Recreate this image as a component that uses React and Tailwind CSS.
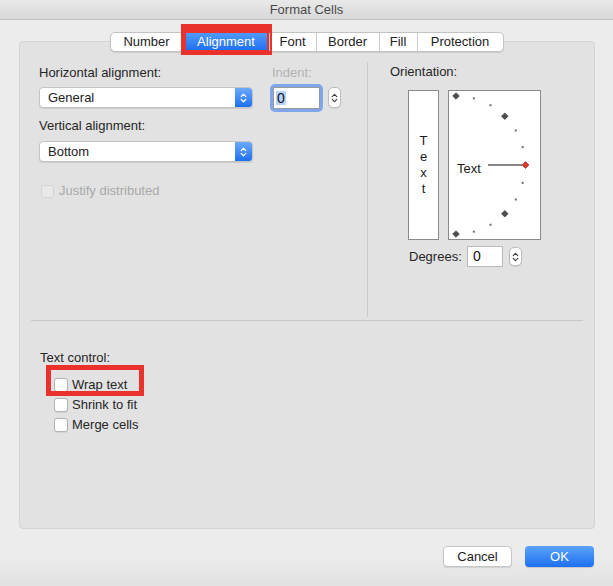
import React from "react";

function Chevrons({ color = "#fff", sw = 1.3 }) {
  return (
    <svg width="7" height="12" viewBox="0 0 7 12" fill="none" stroke={color} strokeWidth={sw} strokeLinecap="round" strokeLinejoin="round">
      <path d="M1.2 4.6 L3.5 2.3 L5.8 4.6" />
      <path d="M1.2 7.4 L3.5 9.7 L5.8 7.4" />
    </svg>
  );
}

function Select({ label }) {
  return (
    <div className="flex h-[21px] w-[214px] overflow-hidden rounded-[4px] border border-[#c4c4c4] bg-white shadow-[0_1px_1px_rgba(0,0,0,0.10)]">
      <div className="flex-1 pl-[8px] text-[13px] leading-[19px] text-[#222]">{label}</div>
      <div className="flex w-[17px] items-center justify-center bg-gradient-to-b from-[#6aa9fa] to-[#1c6ef0]">
        <Chevrons />
      </div>
    </div>
  );
}

function Stepper({ h = "h-[21px]" }) {
  return (
    <div className={`flex w-[13px] ${h} items-center justify-center rounded-[5px] border border-[#bdbdbd] bg-white shadow-[0_1px_1px_rgba(0,0,0,0.08)]`}>
      <Chevrons color="#3a3a3a" sw={1.1} />
    </div>
  );
}

function Checkbox({ disabled }) {
  return (
    <div
      className={
        disabled
          ? "h-[13px] w-[13px] rounded-[3px] border border-[#d3d3d3] bg-[#e9e9e9]"
          : "h-[14px] w-[14px] rounded-[3px] border border-[#b3b3b3] bg-white shadow-[0_1px_1px_rgba(0,0,0,0.08)]"
      }
    />
  );
}

function Dial() {
  const cx = 7;
  const cy = 74;
  const r = 69;
  const dots = [75, 60, 30, 15, -15, -30, -60, -75];
  const diamonds = [90, 45, -45, -90];
  const pt = (a) => [cx + r * Math.cos((a * Math.PI) / 180), cy - r * Math.sin((a * Math.PI) / 180)];
  const diamond = (x, y, s) => `M${x} ${y - s} L${x + s} ${y} L${x} ${y + s} L${x - s} ${y} Z`;
  return (
    <svg width="91" height="148" viewBox="0 0 91 148">
      {dots.map((a) => {
        const [x, y] = pt(a);
        return <rect key={a} x={x - 1} y={y - 1} width="2" height="2" fill="#6e6e6e" />;
      })}
      {diamonds.map((a) => {
        const [x, y] = pt(a);
        return <path key={a} d={diamond(x, y, 3.3)} fill="#4d4d4d" stroke="#333" strokeWidth="0.6" />;
      })}
      <line x1="39" y1="74" x2="73" y2="74" stroke="#111" strokeWidth="1" />
      <path d={diamond(76.5, 74, 3.4)} fill="#e0392c" stroke="#6b1a14" strokeWidth="0.6" />
      <text x="8" y="81.5" fontSize="13" fill="#1a1a1a" fontFamily="'Liberation Sans', Arial, sans-serif">
        Text
      </text>
    </svg>
  );
}

const tabs = [
  { name: "Number", w: "w-[72px]" },
  { name: "Alignment", w: "w-[86px]", active: true },
  { name: "Font", w: "w-[47px]" },
  { name: "Border", w: "w-[63px]" },
  { name: "Fill", w: "w-[38px]" },
  { name: "Protection", w: "w-[86px]" },
];

export default function App() {
  return (
    <div className="flex h-[586px] w-[613px] flex-col overflow-hidden bg-[linear-gradient(to_bottom,#ececec_0px,#ececec_556px,#e1e1e1_586px)] font-['Liberation_Sans',Arial,sans-serif] text-[13px] text-[#262626]">
      {/* Title bar */}
      <div className="flex h-[20px] items-center justify-center border-b border-[#c2c2c2] bg-gradient-to-b from-[#e9e9e9] to-[#d8d8d8] text-[13px] text-[#4a4a4a]">
        Format Cells
      </div>

      {/* Tabs */}
      <div className="relative z-10 mt-[12px] flex justify-center">
        <div className="flex h-[20px] rounded-[5px] border border-[#c3c3c3] bg-white shadow-[0_1px_1px_rgba(0,0,0,0.10)]">
          {tabs.map((t, i) => (
            <div
              key={t.name}
              className={`relative flex ${t.w} items-center justify-center text-[13px] leading-[18px] ${
                i > 0 ? "border-l border-[#cdcdcd]" : ""
              } ${t.active ? "bg-gradient-to-b from-[#4f9af8] to-[#1e6ef0] text-white" : "text-[#222]"}`}
            >
              {t.name}
              {t.active && (
                <div className="absolute left-[-3px] top-[-9px] h-[31px] w-[91px] border-[5px] border-t-[9px] border-[#e8322b]" />
              )}
            </div>
          ))}
        </div>
      </div>

      {/* Panel */}
      <div className="ml-[19px] mt-[-11px] flex h-[488px] w-[576px] flex-col rounded-[4px] border border-[#d3d3d3] bg-[#e2e2e2]">
        <div className="flex h-[278px]">
          {/* Left column */}
          <div className="flex w-[347px] flex-col pl-[19px] pt-[23px]">
            <div className="flex items-start">
              <div className="flex w-[214px] flex-col">
                <div className="h-[16px] leading-[16px]">Horizontal alignment:</div>
                <div className="mt-[6px]">
                  <Select label="General" />
                </div>
                <div className="mt-[10px] h-[16px] leading-[16px]">Vertical alignment:</div>
                <div className="mt-[7px]">
                  <Select label="Bottom" />
                </div>
              </div>
              <div className="ml-[17px] flex flex-col">
                <div className="h-[16px] pl-[2px] leading-[16px] text-[#b2b2b2]">Indent:</div>
                <div className="mt-[3px] flex items-start">
                  <div className="h-[28px] w-[53px] rounded-[5px] border-[3px] border-[#7fa6ea] bg-[#a9c3f0]">
                    <div className="flex h-full w-full items-center border border-[#9a9a9a] bg-white pl-[2px]">
                      <span className="bg-[#b5d3fb] px-[1px] text-[14px] leading-[14px] text-[#111]">0</span>
                    </div>
                  </div>
                  <div className="ml-[5px] mt-[3px]">
                    <Stepper />
                  </div>
                </div>
              </div>
            </div>
            <div className="mt-[21px] flex h-[16px] items-center">
              <div className="ml-[2px]">
                <Checkbox disabled />
              </div>
              <span className="ml-[5px] text-[#a9a9a9]">Justify distributed</span>
            </div>
          </div>

          {/* Divider */}
          <div className="mt-[20px] h-[255px] w-px bg-[#c9c9c9]" />

          {/* Right column */}
          <div className="flex flex-col pl-[22px] pt-[22px]">
            <div className="h-[16px] leading-[16px]">Orientation:</div>
            <div className="ml-[18px] mt-[10px] flex gap-[9px]">
              <div className="flex h-[150px] w-[31px] flex-col items-center justify-center border border-[#8a8a8a] bg-white text-[13px] leading-[16px] text-[#1a1a1a]">
                <span>T</span>
                <span>e</span>
                <span>x</span>
                <span>t</span>
              </div>
              <div className="h-[150px] w-[93px] border border-[#8a8a8a] bg-white">
                <Dial />
              </div>
            </div>
            <div className="ml-[19px] mt-[6px] flex items-center">
              <span className="w-[58px]">Degrees:</span>
              <div className="flex h-[21px] w-[36px] items-center border border-[#b9b9b9] bg-white pl-[5px] text-[14px] text-[#111]">
                0
              </div>
              <div className="ml-[6px]">
                <Stepper h="h-[19px]" />
              </div>
            </div>
          </div>
        </div>

        {/* Separator */}
        <div className="ml-[11px] h-px w-[552px] bg-[#c8c8c8]" />

        {/* Text control */}
        <div className="mt-[29px] h-[16px] pl-[20px] leading-[16px]">Text control:</div>
        <div className="mt-[9px] flex flex-col pl-[34px]">
          <div className="flex h-[20px] items-center">
            <div className="relative flex items-center">
              <Checkbox />
              <span className="ml-[4px]">Wrap text</span>
              <div className="absolute left-[-8px] top-[-10px] h-[31px] w-[98px] border-[5px] border-[#e8322b]" />
            </div>
          </div>
          <div className="flex h-[20px] items-center">
            <Checkbox />
            <span className="ml-[4px]">Shrink to fit</span>
          </div>
          <div className="flex h-[20px] items-center">
            <Checkbox />
            <span className="ml-[4px]">Merge cells</span>
          </div>
        </div>
      </div>

      {/* Buttons */}
      <div className="mt-[17px] flex justify-end gap-[13px] pr-[19px]">
        <div className="flex h-[21px] w-[69px] items-center justify-center rounded-[4px] border border-[#c6c6c6] bg-white text-[13px] text-[#222] shadow-[0_1px_1px_rgba(0,0,0,0.10)]">
          Cancel
        </div>
        <div className="flex h-[21px] w-[69px] items-center justify-center rounded-[4px] bg-gradient-to-b from-[#5aa3fa] to-[#1d6ff0] text-[13px] text-white shadow-[0_1px_1px_rgba(0,0,0,0.15)]">
          OK
        </div>
      </div>
    </div>
  );
}
